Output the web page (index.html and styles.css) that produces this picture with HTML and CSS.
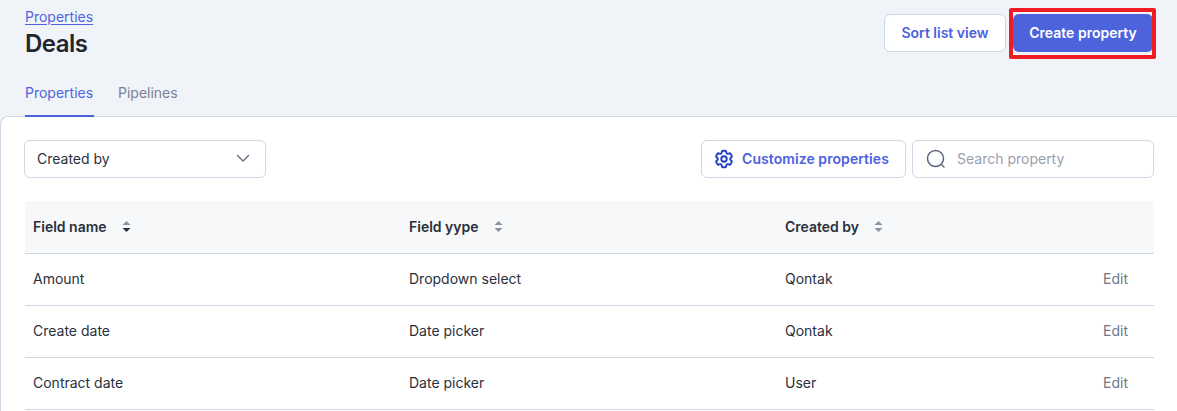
FILE: index.html
```html
<!DOCTYPE html>
<html lang="en">
<head>
<meta charset="utf-8">
<title>Deals properties</title>
<link rel="stylesheet" href="styles.css">
</head>
<body>
<header class="head">
  <div class="head-top">
    <div class="titles">
      <a class="crumb" href="#">Properties</a>
      <h1 class="title">Deals</h1>
    </div>
    <div class="actions">
      <button class="btn btn-outline">Sort list view</button>
      <span class="highlight-wrap">
        <button class="btn btn-primary">Create property</button>
        <span class="highlight"></span>
      </span>
    </div>
  </div>
  <nav class="tabs">
    <a class="tab tab-active" href="#">Properties</a>
    <a class="tab" href="#">Pipelines</a>
  </nav>
</header>
<main class="card">
  <div class="toolbar">
    <div class="select">
      <span>Created by</span>
      <svg class="chev" width="14" height="9" viewBox="0 0 14 9"><path d="M1.500 1.500L7 7l5.500-5.500" fill="none" stroke="#5c667a" stroke-width="1.200" stroke-linecap="round" stroke-linejoin="round"/></svg>
    </div>
    <div class="tools">
      <button class="btn btn-custom">
        <svg width="22" height="22" viewBox="0 0 24 24" fill="none" stroke="#2440c8" stroke-width="2.100" stroke-linejoin="round"><path d="M9.594 3.94c.09-.542.56-.94 1.110-.94h2.593c.55 0 1.020.398 1.110.94l.213 1.281c.063.374.313.686.645.870.074.040.147.083.22.127.325.196.72.257 1.075.124l1.217-.456a1.125 1.125 0 0 1 1.370.49l1.296 2.247a1.125 1.125 0 0 1-.26 1.431l-1.003.827c-.293.241-.438.613-.43.992a7.723 7.723 0 0 1 0 .255c-.008.378.137.75.43.991l1.004.827c.424.35.534.955.26 1.430l-1.298 2.247a1.125 1.125 0 0 1-1.369.491l-1.217-.456c-.355-.133-.75-.072-1.076.124a6.470 6.470 0 0 1-.22.128c-.331.183-.581.495-.644.869l-.213 1.281c-.09.543-.56.94-1.110.94h-2.594c-.55 0-1.019-.398-1.110-.94l-.213-1.281c-.062-.374-.312-.686-.644-.870a6.520 6.520 0 0 1-.22-.127c-.325-.196-.72-.257-1.076-.124l-1.217.456a1.125 1.125 0 0 1-1.369-.49l-1.297-2.247a1.125 1.125 0 0 1 .26-1.431l1.004-.827c.292-.24.437-.613.43-.991a6.932 6.932 0 0 1 0-.255c.007-.38-.138-.751-.43-.992l-1.004-.827a1.125 1.125 0 0 1-.26-1.430l1.297-2.247a1.125 1.125 0 0 1 1.370-.491l1.216.456c.356.133.751.072 1.076-.124.072-.044.146-.086.22-.128.332-.183.582-.495.644-.869l.214-1.280Z"/><circle cx="12" cy="12" r="3"/></svg>
        <span>Customize properties</span>
      </button>
      <div class="search">
        <svg width="20" height="20" viewBox="0 0 20 20" fill="none" stroke="#5c667a" stroke-width="1.500" stroke-linecap="round"><circle cx="9.500" cy="9.500" r="8"/><path d="M16 16l2 2"/></svg>
        <span class="placeholder">Search property</span>
      </div>
    </div>
  </div>
  <table class="table">
    <thead>
      <tr>
        <th class="c1"><span class="th">Field name <svg class="sort" width="9" height="13" viewBox="0 0 9 13"><path d="M4.500 1L8.500 5H.5z" fill="#8a93a6"/><path d="M4.500 12L.5 8h8z" fill="#2a303c"/></svg></span></th>
        <th class="c2"><span class="th">Field yype <svg class="sort" width="9" height="13" viewBox="0 0 9 13"><path d="M4.500 1L8.500 5H.5z" fill="#8a93a6"/><path d="M4.500 12L.5 8h8z" fill="#8a93a6"/></svg></span></th>
        <th class="c3"><span class="th">Created by <svg class="sort" width="9" height="13" viewBox="0 0 9 13"><path d="M4.500 1L8.500 5H.5z" fill="#8a93a6"/><path d="M4.500 12L.5 8h8z" fill="#8a93a6"/></svg></span></th>
        <th class="c4"></th>
      </tr>
    </thead>
    <tbody>
      <tr><td>Amount</td><td>Dropdown select</td><td>Qontak</td><td class="edit">Edit</td></tr>
      <tr><td>Create date</td><td>Date picker</td><td>Qontak</td><td class="edit">Edit</td></tr>
      <tr><td>Contract date</td><td>Date picker</td><td>User</td><td class="edit">Edit</td></tr>
    </tbody>
  </table>
</main>
</body>
</html>
```
FILE: styles.css
```css
* { box-sizing: border-box; }
html, body { margin: 0; height: 411px; overflow: hidden; }
body {
  background: #f0f3f8;
  font-family: Inter, "Liberation Sans", sans-serif;
  font-size: 14px;
  color: #2a303c;
}
.head { height: 116px; padding: 8px 24px 0 25px; }
.head-top { display: flex; justify-content: space-between; align-items: flex-start; }
.titles { display: flex; flex-direction: column; }
.crumb {
  color: #4f65e0;
  font-size: 14px;
  line-height: 18px;
  text-decoration: underline;
  text-underline-offset: 2px;
  text-decoration-thickness: 1px;
  align-self: flex-start;
}
.title {
  margin: 2px 0 0;
  font-size: 24px;
  line-height: 32px;
  font-weight: 600;
  color: #22272f;
  letter-spacing: -0.5px;
}
.actions { display: flex; gap: 7px; padding-top: 6px; }
.btn {
  height: 38px;
  border-radius: 6px;
  font-family: inherit;
  font-size: 14px;
  font-weight: 600;
  display: inline-flex;
  align-items: center;
  justify-content: center;
  padding: 0 0 1px;
}
.btn-outline {
  width: 122px;
  background: #fff;
  border: 1px solid #cfd6e4;
  color: #4b61dd;
}
.btn-primary {
  width: 140px;
  background: #4c63dc;
  border: 0;
  color: #fff;
}
.highlight-wrap { position: relative; display: inline-flex; }
.highlight {
  position: absolute;
  left: -4px;
  right: -3px;
  top: -6px;
  bottom: -7px;
  border: 4px solid #ee1c25;
  border-radius: 2px;
}
.tabs { display: flex; gap: 24px; margin-top: 20px; }
.tab {
  height: 37px;
  padding-top: 3px;
  line-height: 20px;
  color: #7a8295;
  text-decoration: none;
}
.tab-active {
  min-width: 69px;
  color: #4f65e0;
  border-bottom: 2px solid #4c63dc;
  position: relative;
  z-index: 1;
}
.card {
  height: 295px;
  background: #fff;
  border: 1px solid #cfd6e4;
  border-right: 0;
  border-bottom: 0;
  border-top-left-radius: 8px;
  padding: 23px 23px 0 24px;
}
.toolbar { display: flex; justify-content: space-between; height: 38px; }
.select {
  width: 242px;
  height: 38px;
  margin-left: -1px;
  border: 1px solid #cfd6e4;
  border-radius: 6px;
  padding: 0 15px 1px 12px;
  display: flex;
  align-items: center;
  justify-content: space-between;
}
.tools { display: flex; gap: 6px; }
.btn-custom {
  width: 205px;
  gap: 7px;
  justify-content: flex-start;
  padding-left: 11px;
  background: #fff;
  border: 1px solid #cfd6e4;
  color: #4b61dd;
  letter-spacing: 0.07px;
}
.search {
  width: 242px;
  height: 38px;
  border: 1px solid #cfd6e4;
  border-radius: 6px;
  padding: 0 0 1px 13px;
  display: flex;
  align-items: center;
  gap: 11px;
}
.placeholder { color: #98a0b0; }
.table {
  width: 1129px;
  margin-top: 23px;
  border-collapse: collapse;
  table-layout: fixed;
}
.table th {
  height: 52px;
  background: #f7f8fa;
  border-bottom: 1px solid #cfd6e4;
  padding: 0 8px 1px;
  text-align: left;
  font-weight: 600;
}
.th { display: inline-flex; align-items: center; gap: 15px; }
.table td {
  height: 52px;
  border-bottom: 1px solid #cfd6e4;
  padding: 0 8px 2px;
}
.c1, .c2 { width: 376px; }
.c3 { width: 251px; }
.c4 { width: 126px; }
.table td.edit { text-align: right; padding-right: 26px; color: #6f7789; }
```
